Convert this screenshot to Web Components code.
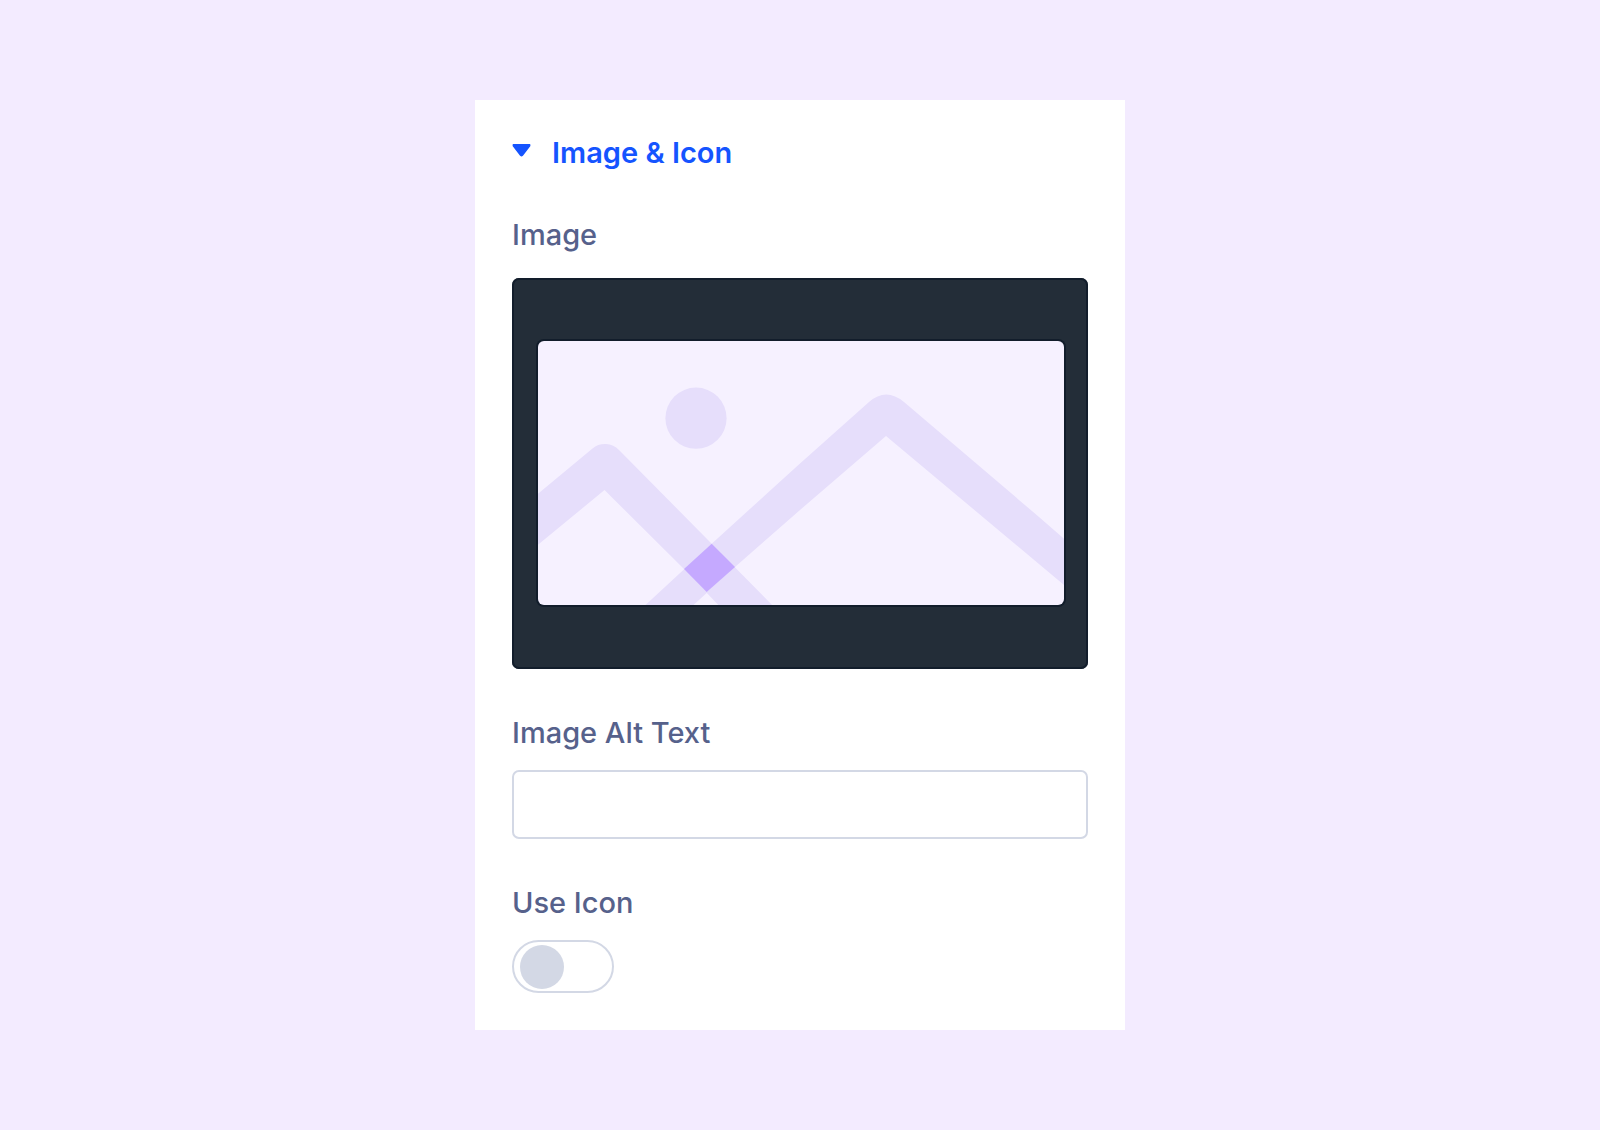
<!DOCTYPE html>
<html lang="en">
<head>
<meta charset="utf-8">
<meta name="viewport" content="width=device-width, initial-scale=1">
<title>Image &amp; Icon</title>
<style>
  body {
    margin: 0;
    min-height: 100vh;
    display: flex;
    align-items: center;
    justify-content: center;
    background: #f3ebff;
    font-family: Inter, "Liberation Sans", sans-serif;
    --accent: #1554ff;
    --label: #56618b;
    --line: #d3d8e5;
    --ink: #232d38;
    --ink-edge: #121d2b;
  }
</style>
</head>
<body>
<settings-panel heading="Image &amp; Icon">
  <image-field label="Image"></image-field>
  <text-field label="Image Alt Text"></text-field>
  <toggle-field label="Use Icon"></toggle-field>
</settings-panel>

<script>
  const fieldStyles = `
    :host { display: flex; flex-direction: column; align-items: stretch; gap: 19px; }
    * { box-sizing: border-box; }
    .label { font-size: 29px; line-height: 36px; font-weight: 500; color: var(--label); }
  `;

  class SettingsPanel extends HTMLElement {
    connectedCallback() {
      const root = this.attachShadow({ mode: 'open' });
      root.innerHTML = `
        <style>
          :host { display: block; box-sizing: border-box; width: 100%; max-width: 650px; padding: 35px 37px 37px; background: #fff; }
          section, .fields { display: flex; flex-direction: column; gap: 46px; }
          .fields[hidden] { display: none; }
          h2 { margin: 0; font: inherit; display: flex; }
          button { display: flex; align-items: center; gap: 21px; margin: 0; padding: 0; border: 0; background: none;
            color: var(--accent); font: 600 29px/36px Inter, "Liberation Sans", sans-serif; cursor: pointer; }
          svg { display: block; width: 19px; height: 18px; }
        </style>
        <section>
          <h2><button type="button" aria-expanded="true">
            <svg viewBox="0 0 19 18" aria-hidden="true"><path d="M1.3 .8H17.7V1.8L10.4 11.3Q9.5 12.1 8.6 11.3L1.3 1.8Z" fill="currentColor" stroke="currentColor" stroke-width="1.4" stroke-linejoin="round"/></svg>
            <span></span>
          </button></h2>
          <div class="fields"><slot></slot></div>
        </section>`;
      root.querySelector('span').textContent = this.getAttribute('heading');
      const button = root.querySelector('button');
      button.addEventListener('click', () => {
        const open = button.getAttribute('aria-expanded') === 'true';
        button.setAttribute('aria-expanded', String(!open));
        root.querySelector('.fields').hidden = open;
      });
    }
  }

  class ImageField extends HTMLElement {
    connectedCallback() {
      const root = this.attachShadow({ mode: 'open' });
      root.innerHTML = `
        <style>
          ${fieldStyles}
          :host { gap: 25px; }
          .frame { padding: 63px 24px 64px 26px; border-radius: 7px; background: var(--ink); box-shadow: inset 0 0 0 2px var(--ink-edge); }
          svg { display: block; width: 100%; height: auto; border-radius: 6px; background: #f6f1ff; box-shadow: 0 0 0 2px var(--ink-edge); }
        </style>
        <div class="label" id="name"></div>
        <div class="frame">
          <svg viewBox="0 0 526 264" role="img" aria-labelledby="name">
            <g fill="#e6defb">
              <circle cx="158" cy="77.2" r="30.6"/>
              <path d="M-5 157L54.5 107.5A19.5 19.5 0 0 1 81 109L173.7 202.7L240 270H186L146 228L66.5 149L-5 208Z"/>
              <path d="M101 270L173.7 202.7L262 122.5L331 61Q348 46 366 61L501 176L535 205.5V251.5L348 95L262 169L197 226L149 270Z"/>
            </g>
            <path d="M173.7 202.7L197 226L168.7 251L146 228Z" fill="#c5a9ff"/>
          </svg>
        </div>`;
      root.querySelector('.label').textContent = this.getAttribute('label');
    }
  }

  class TextField extends HTMLElement {
    connectedCallback() {
      const root = this.attachShadow({ mode: 'open' });
      root.innerHTML = `
        <style>
          ${fieldStyles}
          input { width: 100%; height: 69px; margin: 0; padding: 0 20px; border: 2px solid var(--line); border-radius: 7px;
            background: #fff; color: var(--label); font: 400 29px/36px Inter, "Liberation Sans", sans-serif; }
        </style>
        <label class="label" for="control"></label>
        <input id="control" type="text">`;
      root.querySelector('label').textContent = this.getAttribute('label');
    }
  }

  class ToggleField extends HTMLElement {
    connectedCallback() {
      const root = this.attachShadow({ mode: 'open' });
      root.innerHTML = `
        <style>
          ${fieldStyles}
          input { appearance: none; display: flex; align-items: center; width: 102px; height: 53px; margin: 0; padding: 0 6px;
            border: 2px solid var(--line); border-radius: 27px; background: #fff; cursor: pointer; }
          input::before { content: ""; width: 44px; height: 44px; border-radius: 50%; background: var(--line); }
          input:checked { justify-content: flex-end; border-color: var(--accent); }
          input:checked::before { background: var(--accent); }
        </style>
        <label class="label" for="control"></label>
        <input id="control" type="checkbox" role="switch">`;
      root.querySelector('label').textContent = this.getAttribute('label');
    }
  }

  customElements.define('settings-panel', SettingsPanel);
  customElements.define('image-field', ImageField);
  customElements.define('text-field', TextField);
  customElements.define('toggle-field', ToggleField);
</script>
</body>
</html>
